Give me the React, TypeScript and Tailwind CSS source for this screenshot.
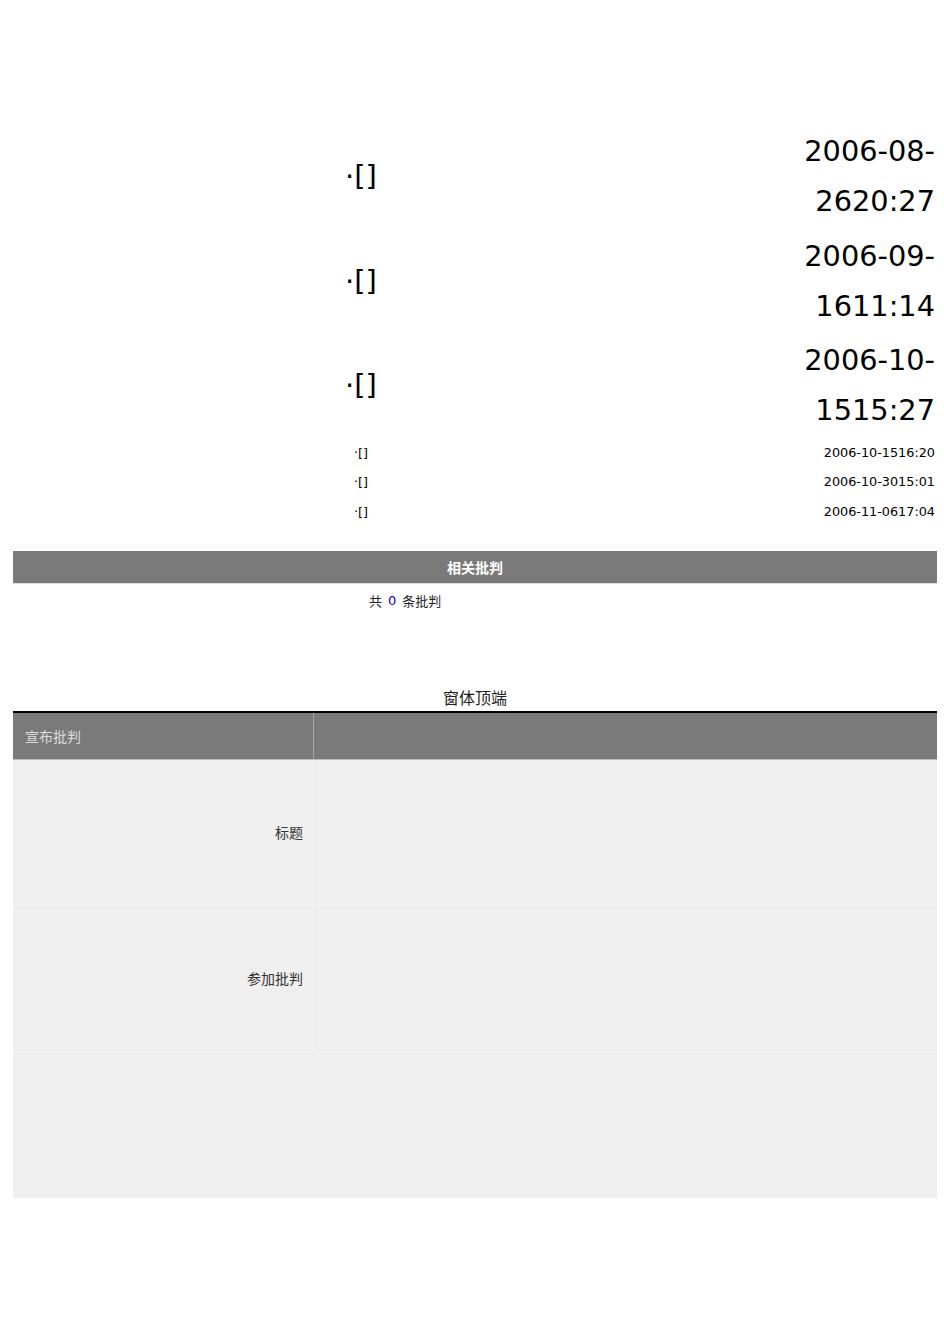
import React from "react";

const big = [
  ["2006-08-", "2620:27"],
  ["2006-09-", "1611:14"],
  ["2006-10-", "1515:27"],
];
const small = ["2006-10-1516:20", "2006-10-3015:01", "2006-11-0617:04"];

export default function App() {
  return (
    <div
      className="w-[950px] min-h-[1344px] bg-white text-black"
      style={{ fontFamily: '"DejaVu Sans", "Noto Sans CJK SC", sans-serif' }}
    >
      <div className="pt-[124px] px-[13px]">
        <div className="w-[924px]">
          {big.map((d, i) => (
            <div key={i} className="grid grid-cols-[696px_228px] items-center h-[104.5px]">
              <div className="text-center text-[29px] leading-[50px]">·[]</div>
              <div className="text-right pr-[2px] text-[28.8px] leading-[50px]">
                <div>{d[0]}</div>
                <div>{d[1]}</div>
              </div>
            </div>
          ))}
          {small.map((d, i) => (
            <div key={i} className="grid grid-cols-[696px_228px] items-center h-[29.5px] text-[12.8px]">
              <div className="text-center">·[]</div>
              <div className="text-right pr-[2px]">{d}</div>
            </div>
          ))}
        </div>
        <div className="mt-[25px] h-[33px] bg-[#7a7a7a] border-b border-[#dddddd] flex items-center justify-center">
          <span
            className="text-white font-bold text-[14px]"
            style={{ fontFamily: '"Noto Sans CJK SC", sans-serif' }}
          >
            相关批判
          </span>
        </div>
        <div
          className="h-[33px] flex items-center pl-[356px] text-[13px] text-[#222]"
          style={{ fontFamily: '"Noto Sans CJK SC", sans-serif' }}
        >
          共<span className="text-[#0000cc] mx-[6px]" style={{ fontFamily: '"DejaVu Sans", sans-serif' }}>0</span>条批判
        </div>
        <div
          className="mt-[70px] text-center text-[16px] leading-[20px] text-[#222]"
          style={{ fontFamily: '"Noto Sans CJK SC", sans-serif' }}
        >
          窗体顶端
        </div>
        <div
          className="mt-[4px] border-t-2 border-black"
          style={{ fontFamily: '"Noto Sans CJK SC", sans-serif' }}
        >
          <div className="grid grid-cols-[301px_1fr] h-[47px] bg-[#7a7a7a] border-b border-[#bbbbbb]">
            <div className="border-r border-[#a8a8a8] flex items-center pl-[12px] text-[14px] text-[#dddddd]">
              宣布批判
            </div>
            <div />
          </div>
          <div className="bg-[#efefef]">
            <div className="grid grid-cols-[301px_1fr] h-[146px] border-b border-[#f5f5f5]">
              <div className="border-r border-[#f5f5f5] flex items-center justify-end pr-[10px] text-[14px] text-[#333]">
                标题
              </div>
              <div />
            </div>
            <div className="grid grid-cols-[301px_1fr] h-[146px] border-b border-[#f5f5f5]">
              <div className="border-r border-[#f5f5f5] flex items-center justify-end pr-[10px] text-[14px] text-[#333]">
                参加批判
              </div>
              <div />
            </div>
            <div className="h-[146px]" />
          </div>
        </div>
      </div>
    </div>
  );
}
